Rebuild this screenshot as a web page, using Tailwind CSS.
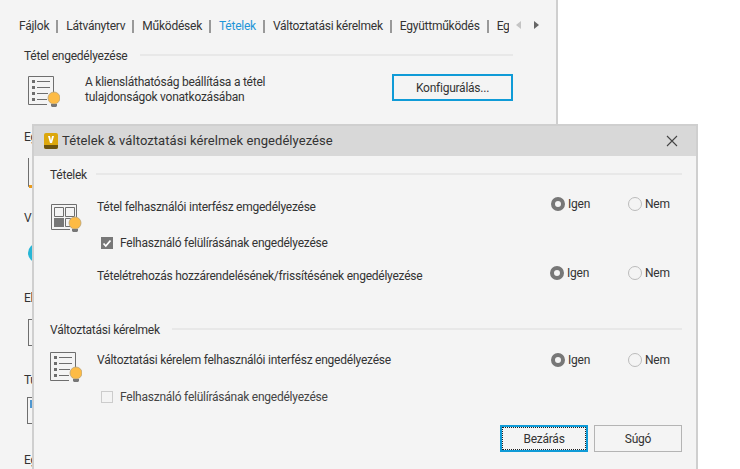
<!DOCTYPE html>
<html lang="en">
    <head>
        <meta charset="UTF-8" />
        <script src="https://cdn.jsdelivr.net/npm/@tailwindcss/browser@4"></script>
    </head>
    <body class="bg-white overflow-hidden font-['Roboto',sans-serif] text-[12px] tracking-[-0.24px] text-[#333]">
        <div class="relative w-[740px] h-[469px] overflow-hidden">
            <!-- settings page behind the dialog -->
            <div class="w-[558px] h-[469px] bg-[#f4f4f4] border-r-2 border-[#cfcfcf] overflow-hidden">
                <div class="flex items-center h-[14px] mt-[19px] ml-[19px]">
                    <div class="flex items-center w-[490px] overflow-hidden whitespace-nowrap">
                        <span>Fájlok</span>
                        <span class="w-[2px] h-[13px] bg-[#999] ml-[7px] mr-[8px] shrink-0"></span>
                        <span>Látványterv</span>
                        <span class="w-[2px] h-[13px] bg-[#999] ml-[7px] mr-[8px] shrink-0"></span>
                        <span>Működések</span>
                        <span class="w-[2px] h-[13px] bg-[#999] ml-[7px] mr-[8px] shrink-0"></span>
                        <span class="text-[#1f96d8]">Tételek</span>
                        <span class="w-[2px] h-[13px] bg-[#999] ml-[7px] mr-[8px] shrink-0"></span>
                        <span>Változtatási kérelmek</span>
                        <span class="w-[2px] h-[13px] bg-[#999] ml-[7px] mr-[8px] shrink-0"></span>
                        <span>Együttműködés</span>
                        <span class="w-[2px] h-[13px] bg-[#999] ml-[7px] mr-[8px] shrink-0"></span>
                        <span>Egyéb</span>
                    </div>
                    <svg class="ml-[7px] mt-[-3px]" width="5" height="8" viewBox="0 0 5 8"><path d="M5 0v8L0 4z" fill="#c4c4c4" /></svg>
                    <svg class="ml-[13px] mt-[-3px]" width="5" height="8" viewBox="0 0 5 8"><path d="M0 0v8l5-4z" fill="#666" /></svg>
                </div>

                <div class="flex items-center h-[16px] mt-[15px] ml-[24px] w-[489px]">
                    <span class="mr-[13px]">Tétel engedélyezése</span>
                    <span class="flex-1 h-[2px] bg-[#e8e8e8] mt-[-2px]"></span>
                </div>

                <div class="flex mt-[10px] ml-[28px] w-[485px] h-[33px]">
                    <svg width="32" height="32" viewBox="0 0 32 32" class="mt-[2px]">
                        <path d="M.5.500h25v17M19 28.500H.5V.5" fill="none" stroke="#6e6e6e" />
                        <path d="M4 4h3v3H4zM4 10h3v3H4zM4 16h3v3H4zM4 22h3v3H4z" fill="#6e6e6e" />
                        <path d="M9 5.500h13M9 11.500h13M9 17.500h11M9 23.500h10" stroke="#6e6e6e" />
                        <circle cx="26" cy="22" r="6" fill="#fdbb45" stroke="#b9a276" stroke-width=".8" />
                        <path d="M23 28h6v2l-1 1h-4l-1-1z" fill="#777" />
                    </svg>
                    <p class="ml-[25px] w-[210px] leading-[15px] mt-[1px]">A kliensláthatóság beállítása a tétel tulajdonságok vonatkozásában</p>
                    <button class="ml-auto w-[121px] h-[27px] border-2 border-[#0f9bd7] text-center">Konfigurálás...</button>
                </div>

                <div class="ml-[24px] mt-[22px] h-[16px] leading-[16px]">Egyéb</div>
                <svg width="32" height="30" viewBox="0 0 32 30" class="ml-[28px] mt-[13px]">
                    <path d="M.5 0v28.500H3" fill="none" stroke="#6e6e6e" />
                    <path d="M1 27h3v3H1z" fill="#e99a1c" />
                </svg>
                <div class="ml-[24px] mt-[22px] h-[16px] leading-[16px]">Vizuális</div>
                <div class="ml-[28px] mt-[17px] w-[20px] h-[20px] rounded-full bg-[#27b6d6]"></div>
                <div class="ml-[24px] mt-[27px] h-[16px] leading-[16px]">Elemek</div>
                <div class="ml-[28px] mt-[13px] w-[30px] h-[27px] border border-[#6e6e6e]"></div>
                <div class="ml-[24px] mt-[26px] h-[16px] leading-[16px]">Tulajdonságok</div>
                <div class="ml-[27px] mt-[9px] w-[30px] h-[27px] border border-[#6e6e6e] p-[2px]">
                    <div class="w-[3px] h-[8px] bg-[#4f97d0]"></div>
                </div>
                <div class="ml-[24px] mt-[28px] h-[16px] leading-[16px]">Egyéb</div>
            </div>

            <!-- dialog window -->
            <div class="absolute left-[32px] top-[124px] w-[666px] h-[360px] bg-[#f4f4f4] border-2 border-[#cfcfcf] border-b-0 box-border">
                <div class="flex items-center h-[30px] bg-[#d8d8d8] pl-[10px] pr-[18px]">
                    <svg width="15" height="17" viewBox="0 0 15 17">
                        <rect x="0" y="0" width="14" height="16" rx="2" fill="#dca70c" />
                        <path d="M0 12h14v2a2 2 0 0 1-2 2H2a2 2 0 0 1-2-2z" fill="#6b5310" />
                        <path d="M4 3h2l1 4.500L8 3h2L8 10H6z" fill="#fff" />
                    </svg>
                    <span class="ml-[3px] text-[13px] tracking-[0.07px]">Tételek &amp; változtatási kérelmek engedélyezése</span>
                    <svg class="ml-auto" width="12" height="12" viewBox="0 0 12 12"><path d="M1 1l10 10M11 1L1 11" stroke="#444" stroke-width="1.100" /></svg>
                </div>

                <div class="pl-[16px] pr-[14px]">
                    <div class="flex items-center h-[16px] mt-[11px]">
                        <span class="mr-[9px]">Tételek</span>
                        <span class="flex-1 h-[2px] bg-[#e8e8e8] mt-[-2px]"></span>
                    </div>

                    <div class="flex h-[34px] mt-[21px]">
                        <svg width="32" height="32" viewBox="0 0 32 32" class="ml-[1px]">
                            <path d="M.5 25.500V.5h25v13M.5 25.500H19" fill="none" stroke="#6e6e6e" />
                            <path d="M3.500 3.500h9v9h-9zM14.500 3.500h9v9h-9z" fill="none" stroke="#6e6e6e" />
                            <path d="M3 14h10v9H3z" fill="#777" />
                            <path d="M14.500 14.500h5v8h-5z" fill="none" stroke="#6e6e6e" />
                            <circle cx="24" cy="19" r="6" fill="#fdbb45" stroke="#b9a276" stroke-width=".8" />
                            <path d="M21 25h6v2l-1 1h-4l-1-1z" fill="#777" />
                        </svg>
                        <span class="ml-[14px] leading-[16px] mt-[-5px]">Tétel felhasználói interfész emgedélyezése</span>
                        <div class="flex items-center ml-auto h-[16px] mt-[-8px]">
                            <span class="w-[14px] h-[14px] rounded-full border-[4px] border-[#777] bg-[#f4f4f4]"></span>
                            <span class="ml-[3px] w-[60px]">Igen</span>
                            <span class="w-[14px] h-[14px] rounded-full border border-[#bbb]"></span>
                            <span class="ml-[3px] w-[26px] mr-[11px]">Nem</span>
                        </div>
                    </div>

                    <div class="flex items-center h-[16px] ml-[51px] mt-[-3px]">
                        <span class="w-[12px] h-[12px] bg-[#777] flex items-center justify-center">
                            <svg width="10" height="9" viewBox="0 0 10 9"><path d="M1.500 4.500l2.300 2.500L8.500 1.500" fill="none" stroke="#fff" stroke-width="1.800" /></svg>
                        </span>
                        <span class="ml-[7px]">Felhasználó felülírásának engedélyezése</span>
                    </div>

                    <div class="flex items-center h-[16px] mt-[15px] ml-[47px]">
                        <span class="mt-[4px]">Tételétrehozás hozzárendelésének/frissítésének engedélyezése</span>
                        <div class="flex items-center ml-auto mt-[-2px]">
                            <span class="w-[14px] h-[14px] rounded-full border-[4px] border-[#777] bg-[#f4f4f4]"></span>
                            <span class="ml-[3px] w-[61px]">Igen</span>
                            <span class="w-[14px] h-[14px] rounded-full border border-[#bbb]"></span>
                            <span class="ml-[3px] w-[26px] mr-[11px]">Nem</span>
                        </div>
                    </div>

                    <div class="flex items-center h-[16px] mt-[40px]">
                        <span class="mr-[12px]">Változtatási kérelmek</span>
                        <span class="flex-1 h-[2px] bg-[#e8e8e8] mt-[-2px]"></span>
                    </div>

                    <div class="flex h-[33px] mt-[14px]">
                        <svg width="32" height="32" viewBox="0 0 32 32">
                            <path d="M.5.500h25v16M19 28.500H.5V.5" fill="none" stroke="#6e6e6e" />
                            <path d="M4 4h3v3H4zM4 10h3v3H4zM4 16h3v3H4zM4 22h3v3H4z" fill="#6e6e6e" />
                            <path d="M9 5.500h13M9 11.500h13M9 17.500h11M9 23.500h10" stroke="#6e6e6e" />
                            <circle cx="26" cy="21" r="6" fill="#fdbb45" stroke="#b9a276" stroke-width=".8" />
                            <path d="M23 27h6v2l-1 1h-4l-1-1z" fill="#777" />
                        </svg>
                        <span class="ml-[15px] leading-[16px]">Változtatási kérelem felhasználói interfész engedélyezése</span>
                        <div class="flex items-center ml-auto h-[16px]">
                            <span class="w-[14px] h-[14px] rounded-full border-[4px] border-[#777] bg-[#f4f4f4]"></span>
                            <span class="ml-[3px] w-[60px]">Igen</span>
                            <span class="w-[14px] h-[14px] rounded-full border border-[#bbb]"></span>
                            <span class="ml-[3px] w-[26px] mr-[11px]">Nem</span>
                        </div>
                    </div>

                    <div class="flex items-center h-[16px] ml-[51px] mt-[4px]">
                        <span class="w-[12px] h-[12px] border border-[#ccc]"></span>
                        <span class="ml-[7px] text-[#444]">Felhasználó felülírásának engedélyezése</span>
                    </div>

                    <div class="flex justify-end gap-[6px] mt-[20px]">
                        <button class="w-[88px] h-[27px] border-2 border-[#0f9bd7] outline-1 outline-dotted outline-[#222] outline-offset-[-3px] text-center">Bezárás</button>
                        <button class="w-[88px] h-[27px] border border-[#b4b4b4] text-center">Súgó</button>
                    </div>
                </div>
            </div>
        </div>
    </body>
</html>
